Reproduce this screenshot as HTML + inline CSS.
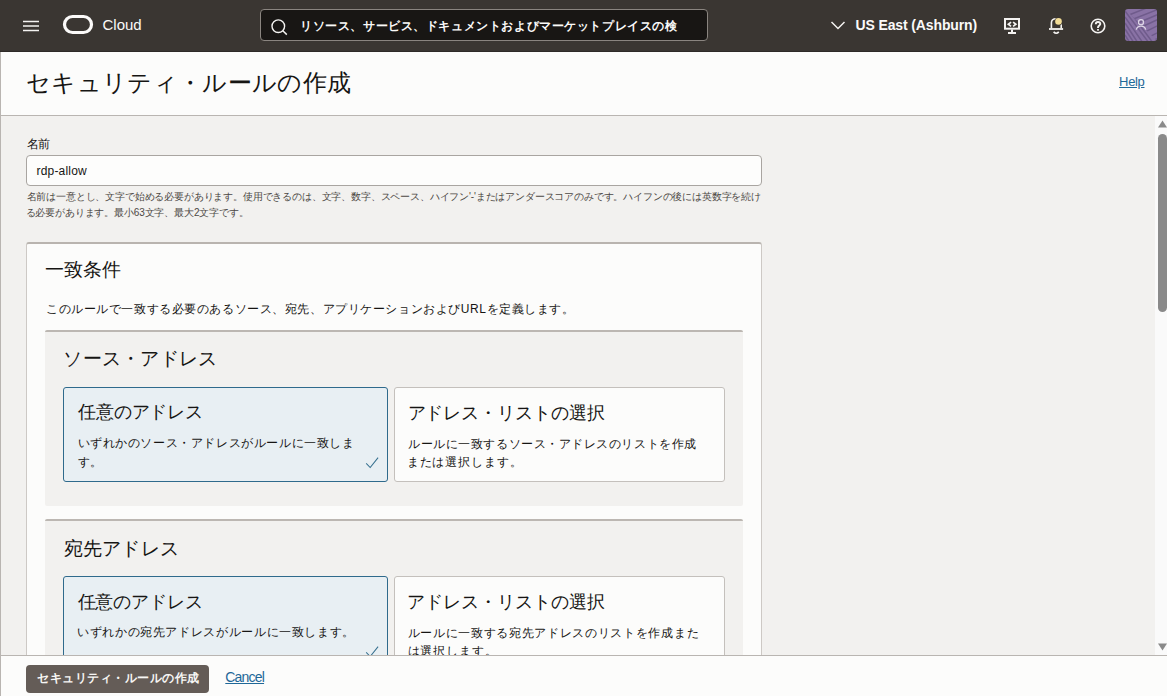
<!DOCTYPE html>
<html><head><meta charset="utf-8">
<style>
*{box-sizing:border-box;margin:0;padding:0}
html,body{width:1167px;height:696px;overflow:hidden;background:#fcfcfb;font-family:"Liberation Sans",sans-serif;color:#161513;position:relative}
div,svg{position:absolute}
.nw{white-space:nowrap}
#hdr{left:0;top:0;width:1167px;height:52px;background:#3a3632;border-bottom:1px solid #2e2a27}
#search{left:260px;top:9px;width:448px;height:32px;background:#181614;border:1px solid #8a8580;border-radius:4px}
#titlebar{left:0;top:52px;width:1167px;height:64px;background:#fcfcfb;border-left:1px solid #b9b5b1;border-bottom:1px solid #b9b5b1}
#content{left:0;top:116px;width:1155px;height:539px;background:#f2f1ef;border-left:1px solid #b9b5b1}
#sb{left:1155px;top:116px;width:12px;height:539px;background:#fafafa}
#footer{left:0;top:655px;width:1167px;height:41px;background:#fcfcfb;border-top:1px solid #b9b5b1;border-left:1px solid #b9b5b1;z-index:5}
.input{left:26px;top:155px;width:736px;height:31px;background:#fdfdfc;border:1px solid #a9a5a1;border-radius:4px}
.card{left:26px;top:242px;width:736px;height:500px;background:#fcfcfb;border:1px solid #cdc9c5;border-top:2px solid #b9b4af;border-radius:3px}
.panel{left:45px;width:698px;background:#f2f1ef;border-top:2px solid #bcb7b2;border-radius:2px}
.tile{width:325px;height:95px;border:1px solid #c4c0bc;border-radius:3px;background:#fcfcfb}
.tile.sel{background:#e8eff3;border:1px solid #2f6a8c}
#btn,#cancel{z-index:7}
</style></head>
<body>
<div id="hdr">
  <svg style="left:23px;top:20px" width="16" height="12" viewBox="0 0 16 12"><path d="M0 1.5H16M0 6H16M0 10.5H16" stroke="#f4f3f1" stroke-width="1.5"/></svg>
  <svg style="left:62px;top:14px" width="32" height="21" viewBox="0 0 32 21"><rect x="2.5" y="2.5" width="27" height="16" rx="8" ry="8" fill="none" stroke="#fbfaf9" stroke-width="3.2"/></svg>
  <div id="search"></div>
  <svg style="left:270px;top:18px" width="20" height="20" viewBox="0 0 20 20"><circle cx="8.3" cy="8.2" r="6.3" fill="none" stroke="#f4f3f1" stroke-width="1.4"/><path d="M12.8 12.8L16.8 16.6" stroke="#f4f3f1" stroke-width="1.5"/></svg>
  <svg style="left:830px;top:20px" width="16" height="10" viewBox="0 0 16 10"><path d="M1.5 2L8 8.5L14.5 2" fill="none" stroke="#f4f3f1" stroke-width="1.5"/></svg>
  <svg style="left:1000px;top:14px" width="24" height="24" viewBox="0 0 24 24"><rect x="5" y="5" width="14" height="9.7" fill="none" stroke="#f4f3f1" stroke-width="2"/><rect x="11" y="15.5" width="2" height="2.6" fill="#f4f3f1"/><rect x="8" y="18" width="8" height="2" fill="#f4f3f1"/><path d="M11.1 8.1L8.3 10.25L11.1 12.4M13.1 8.1L15.9 10.25L13.1 12.4" fill="none" stroke="#f4f3f1" stroke-width="1.7"/></svg>
  <svg style="left:1042px;top:12px" width="30" height="28" viewBox="0 0 30 28"><path d="M9.4 16.2V10.8C9.4 8.2 11.5 6.8 14.3 6.8C17.1 6.8 19.2 8.2 19.2 10.8V16.2" fill="none" stroke="#f4f3f1" stroke-width="1.6"/><rect x="7" y="16.1" width="14.1" height="1.8" fill="#f4f3f1"/><path d="M11.6 19.9Q14.2 22.6 16.8 19.9" fill="none" stroke="#f4f3f1" stroke-width="1.6"/><circle cx="16.5" cy="9.4" r="4" fill="#3a3632"/><circle cx="16.5" cy="9.4" r="3.3" fill="#f2dd97"/></svg>
  <svg style="left:1084px;top:12px" width="28" height="28" viewBox="0 0 28 28"><circle cx="14" cy="14" r="6.8" fill="none" stroke="#f4f3f1" stroke-width="1.6"/><path d="M11.8 12.2C11.8 10.8 12.8 10 14 10C15.3 10 16.3 10.8 16.3 12C16.3 13.4 14 13.6 14 15.4V15.9" fill="none" stroke="#f4f3f1" stroke-width="1.9"/><rect x="13" y="17.1" width="2" height="1.5" fill="#f4f3f1"/></svg>
  <div style="left:1125px;top:9px;width:32px;height:32px;border-radius:3px;overflow:hidden;background:#8972a5">
    <svg style="left:0;top:0" width="32" height="32" viewBox="0 0 32 32"><defs><clipPath id="ca"><path d="M0 0H32V32Z"/></clipPath><clipPath id="cb"><path d="M0 0V32H32Z"/></clipPath></defs><g stroke="#6f5b8b" stroke-width="1.5" fill="none" clip-path="url(#ca)"><path d="M4 6L34 -6M6 11L34 0M8 16L34 5M10 21L34 10M14 26L34 16M18 31L34 23M24 33L34 29"/></g><g stroke="#6f5b8b" stroke-width="1.5" fill="none" clip-path="url(#cb)"><path d="M0 2L24 34M0 8L18 34M0 14L13 34M0 20L9 34M0 26L5 34M3 0L28 34"/></g><circle cx="16" cy="13.2" r="2.5" fill="none" stroke="#ddd5e5" stroke-width="1.3"/><path d="M11.3 20.6C11.8 18.4 13.6 17.2 16 17.2S20.2 18.4 20.7 20.6" fill="none" stroke="#ddd5e5" stroke-width="1.3"/></svg>
  </div>
</div>
<div id="titlebar"></div>
<div id="content"></div>
<div class="input"></div>
<div class="card"></div>
<div class="panel" style="top:330px;height:175.5px"></div>
<div class="tile sel" style="left:63px;top:387px"></div>
<svg style="left:364px;top:455px" width="16" height="15" viewBox="0 0 16 15"><path d="M2.2 8.4L6.2 12.5L14.1 2.6" fill="none" stroke="#36708f" stroke-width="1.05"/></svg>
<div class="tile" style="left:394px;top:387px;width:331px"></div>
<div class="panel" style="top:519px;height:200px"></div>
<div class="tile sel" style="left:63px;top:576px"></div>
<svg style="left:364px;top:644px" width="16" height="15" viewBox="0 0 16 15"><path d="M2.2 8.4L6.2 12.5L14.1 2.6" fill="none" stroke="#36708f" stroke-width="1.05"/></svg>
<div class="tile" style="left:394px;top:576px;width:331px"></div>
<div id="sb">
  <svg style="left:3px;top:4px" width="9" height="8" viewBox="0 0 9 8"><path d="M4.5 0.5L9 7.5H0Z" fill="#8a8a8a"/></svg>
  <div style="left:3px;top:18px;width:9px;height:178px;border-radius:4.5px;background:#8a8a8a"></div>
  <svg style="left:3px;top:527px" width="9" height="8" viewBox="0 0 9 8"><path d="M0 0.5H9L4.5 7.5Z" fill="#8a8a8a"/></svg>
</div>
<div class="t nw" id="title" style="left:26.00px;top:68.50px;font-size:24px;line-height:28.80px;letter-spacing:0.333px;">セキュリティ・ルールの作成</div>
<div class="t nw" id="cloud" style="left:102.50px;top:16.00px;font-size:15px;line-height:18.00px;letter-spacing:0.0px;color:#fbfaf9">Cloud</div>
<div class="t nw" id="searchtxt" style="left:300.00px;top:18.79px;font-size:12px;line-height:14.40px;letter-spacing:0.586px;color:#fbfaf9;font-weight:bold">リソース、サービス、ドキュメントおよびマーケットプレイスの検</div>
<div class="t nw" id="region" style="left:855.50px;top:17.30px;font-size:14px;line-height:16.80px;letter-spacing:-0.124px;color:#fbfaf9;font-weight:bold">US East (Ashburn)</div>
<div class="t nw" id="help" style="left:1119.10px;top:74.30px;font-size:13px;line-height:15.60px;letter-spacing:-0.334px;color:#1f6898;text-decoration:underline">Help</div>
<div class="t nw" id="namelbl" style="left:27.00px;top:136.50px;font-size:12px;line-height:14.40px;letter-spacing:-1.0px;">名前</div>
<div class="t nw" id="rdp" style="left:36.50px;top:163.60px;font-size:12px;line-height:14.40px;letter-spacing:0.188px;">rdp-allow</div>
<div class="t nw" id="help1" style="left:26.50px;top:191.30px;font-size:10px;line-height:12.00px;letter-spacing:-0.165px;color:#4c4844">名前は一意とし、文字で始める必要があります。使用できるのは、文字、数字、スペース、ハイフン'-'またはアンダースコアのみです。ハイフンの後には英数字を続け</div>
<div class="t nw" id="help2" style="left:25.50px;top:206.60px;font-size:10px;line-height:12.00px;letter-spacing:-0.152px;color:#4c4844">る必要があります。最小63文字、最大2文字です。</div>
<div class="t nw" id="hmatch" style="left:45.40px;top:258.70px;font-size:19px;line-height:22.80px;letter-spacing:-0.066px;">一致条件</div>
<div class="t nw" id="desc" style="left:46.00px;top:301.60px;font-size:12px;line-height:14.40px;letter-spacing:0.571px;">このルールで一致する必要のあるソース、宛先、アプリケーションおよびURLを定義します。</div>
<div class="t nw" id="hsrc" style="left:63.30px;top:347.50px;font-size:19px;line-height:22.80px;letter-spacing:0.257px;">ソース・アドレス</div>
<div class="t nw" id="s1t" style="left:78.00px;top:402.00px;font-size:18px;line-height:21.60px;letter-spacing:-0.166px;">任意のアドレス</div>
<div class="t nw" id="s1d1" style="left:77.50px;top:436.00px;font-size:12px;line-height:14.40px;letter-spacing:0.595px;">いずれかのソース・アドレスがルールに一致しま</div>
<div class="t nw" id="s1d2" style="left:78.00px;top:454.50px;font-size:12px;line-height:14.40px;letter-spacing:0.0px;">す。</div>
<div class="t nw" id="s2t" style="left:407.50px;top:402.60px;font-size:18px;line-height:21.60px;letter-spacing:-0.05px;">アドレス・リストの選択</div>
<div class="t nw" id="s2d1" style="left:408.20px;top:436.50px;font-size:12px;line-height:14.40px;letter-spacing:0.546px;">ルールに一致するソース・アドレスのリストを作成</div>
<div class="t nw" id="s2d2" style="left:406.70px;top:455.40px;font-size:12px;line-height:14.40px;letter-spacing:0.901px;">または選択します。</div>
<div class="t nw" id="hdst" style="left:63.50px;top:537.50px;font-size:19px;line-height:22.80px;letter-spacing:0.3px;">宛先アドレス</div>
<div class="t nw" id="d1t" style="left:77.50px;top:591.70px;font-size:18px;line-height:21.60px;letter-spacing:-0.034px;">任意のアドレス</div>
<div class="t nw" id="d1d1" style="left:77.00px;top:625.10px;font-size:12px;line-height:14.40px;letter-spacing:0.638px;">いずれかの宛先アドレスがルールに一致します。</div>
<div class="t nw" id="d2t" style="left:406.50px;top:591.60px;font-size:18px;line-height:21.60px;letter-spacing:0.1px;">アドレス・リストの選択</div>
<div class="t nw" id="d2d1" style="left:407.50px;top:625.50px;font-size:12px;line-height:14.40px;letter-spacing:0.682px;">ルールに一致する宛先アドレスのリストを作成また</div>
<div class="t nw" id="d2d2" style="left:407.50px;top:644.40px;font-size:12px;line-height:14.40px;letter-spacing:0.901px;">は選択します。</div>
<div class="t nw" id="btn" style="left:37.30px;top:670.80px;font-size:12px;line-height:14.40px;letter-spacing:0.5px;color:#f7f6f4;font-weight:bold">セキュリティ・ルールの作成</div>
<div class="t nw" id="cancel" style="left:225.30px;top:668.99px;font-size:14px;line-height:16.80px;letter-spacing:-0.8px;color:#1f6898;text-decoration:underline">Cancel</div>
<div id="footer"><div style="left:25px;top:9px;width:183px;height:28px;background:#645c57;border-radius:4px"></div></div>
</body></html>
